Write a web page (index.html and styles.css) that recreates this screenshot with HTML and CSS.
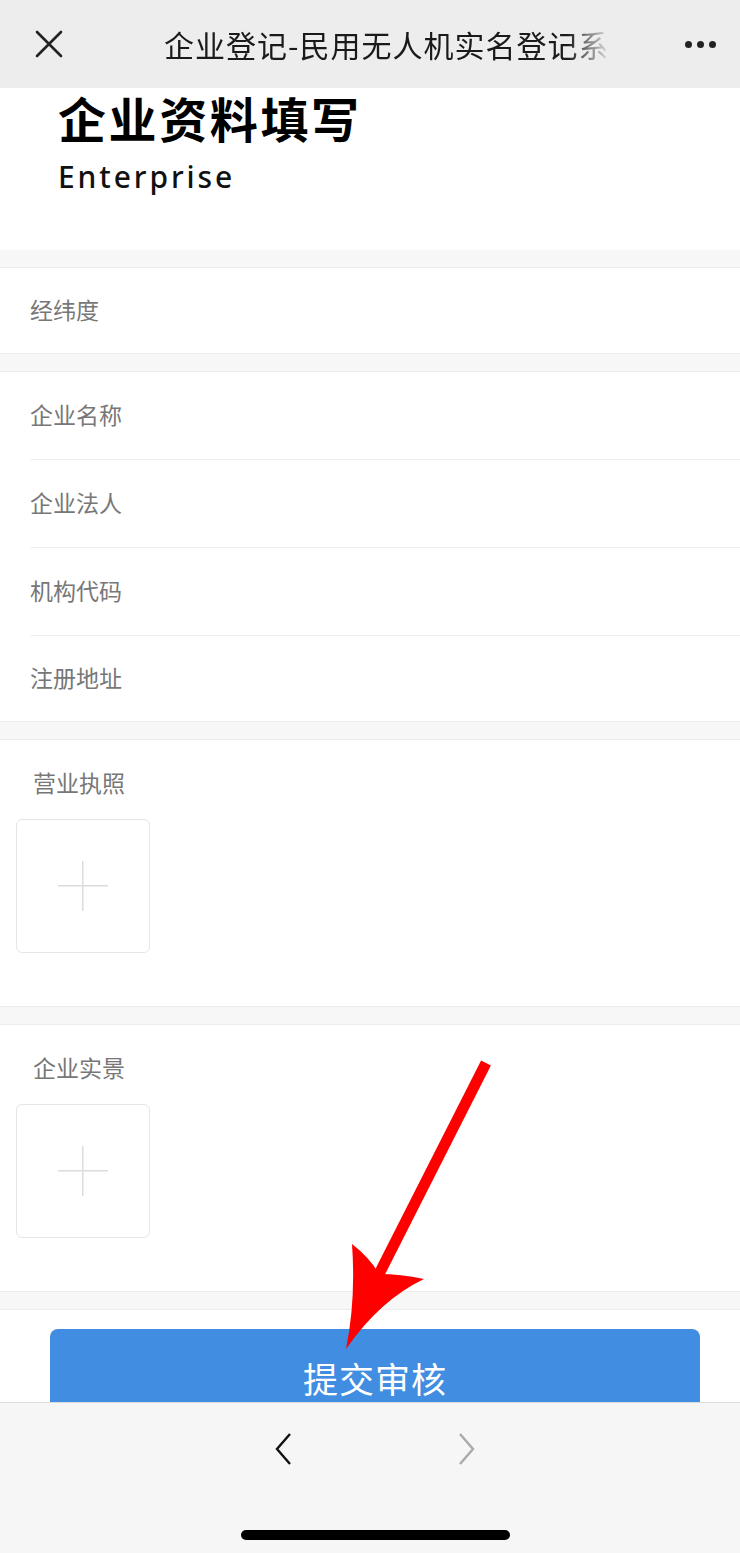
FILE: index.html
```html
<!DOCTYPE html>
<html lang="zh-CN">
<head>
<meta charset="utf-8">
<title>企业登记-民用无人机实名登记系统</title>
<link rel="stylesheet" href="styles.css">
</head>
<body>
<div class="screen">
  <header class="topbar">
    <div class="tb-close">
      <svg width="30" height="30" viewBox="0 0 30 30"><path d="M3 3 L27 27 M27 3 L3 27" stroke="#222" stroke-width="2.6" stroke-linecap="round" fill="none"/></svg>
    </div>
    <div class="tb-title"><span>企业登记-民用无人机实名登记系统</span></div>
    <div class="tb-more">
      <span class="dot"></span><span class="dot"></span><span class="dot"></span>
    </div>
  </header>

  <main class="content">
    <section class="hero">
      <h1 class="hero-title">企业资料填写</h1>
      <div class="hero-sub">Enterprise</div>
    </section>

    <section class="card">
      <div class="row">经纬度</div>
    </section>

    <section class="card">
      <div class="row">企业名称</div>
      <div class="row">企业法人</div>
      <div class="row">机构代码</div>
      <div class="row">注册地址</div>
    </section>

    <section class="card upload">
      <div class="up-label">营业执照</div>
      <div class="up-box"><span class="plus"></span></div>
    </section>

    <section class="card upload">
      <div class="up-label">企业实景</div>
      <div class="up-box"><span class="plus"></span></div>
    </section>

    <section class="card submit">
      <div class="btn">提交审核</div>
    </section>
  </main>

  <footer class="navbar">
    <div class="nav-arrows">
      <svg width="20" height="32" viewBox="0 0 20 32"><path d="M16 1 L3 16 L16 31" stroke="#111" stroke-width="2.4" fill="none" stroke-linejoin="miter"/></svg>
      <svg width="20" height="32" viewBox="0 0 20 32"><path d="M4 1 L17 16 L4 31" stroke="#aaa" stroke-width="2.4" fill="none"/></svg>
    </div>
    <div class="home-ind"></div>
  </footer>

  <svg class="annot" width="740" height="1553" viewBox="0 0 740 1553">
    <line x1="486" y1="1063" x2="376" y2="1280" stroke="#ff0000" stroke-width="11"/>
    <path d="M346 1349 Q356 1300 352 1244 Q370 1258 379 1274 Q400 1274 424 1279 Q380 1300 346 1349 Z" fill="#ff0000"/>
  </svg>
</div>
</body>
</html>
```

FILE: styles.css
```css
* { box-sizing: border-box; }
html, body { margin: 0; padding: 0; }
body {
  font-family: "Noto Sans", "Noto Sans CJK SC", sans-serif;
  background: #f7f7f7;
}
.screen {
  position: relative;
  width: 740px;
  height: 1553px;
  display: flex;
  flex-direction: column;
  overflow: hidden;
}
.topbar {
  height: 88px;
  flex: none;
  background: #ededed;
  display: flex;
  align-items: center;
}
.tb-close {
  width: 100px;
  display: flex;
  justify-content: center;
  padding-right: 2px;
}
.tb-title {
  flex: 1;
  padding-left: 64px;
  padding-right: 48px;
  overflow: hidden;
  white-space: nowrap;
}
.tb-title span {
  display: block;
  overflow: hidden;
  font-family: "Noto Sans CJK SC", sans-serif;
  font-size: 30px;
  letter-spacing: 1px;
  color: #1a1a1a;
  -webkit-mask-image: linear-gradient(to right, #000 90%, transparent 100%);
  mask-image: linear-gradient(to right, #000 90%, transparent 100%);
}
.tb-more {
  width: 80px;
  display: flex;
  justify-content: center;
  gap: 5px;
}
.dot {
  width: 7px;
  height: 7px;
  border-radius: 50%;
  background: #222;
}
.content {
  flex: 1;
  overflow: hidden;
  background: #f7f7f7;
}
.hero {
  background: #fff;
  padding: 0 0 53px 58px;
}
.hero-title {
  margin: 0;
  font-family: "Noto Sans CJK SC", sans-serif;
  font-size: 48px;
  line-height: 58px;
  font-weight: 700;
  letter-spacing: 2.6px;
  color: #000;
}
.hero-sub {
  margin-top: 11px;
  font-family: "Noto Sans", sans-serif;
  font-size: 30px;
  line-height: 40px;
  font-weight: 500;
  letter-spacing: 2.9px;
  color: #111;
}
.card {
  background: #fff;
  border-top: 1px solid #ececec;
  border-bottom: 1px solid #ececec;
  margin-top: 17px;
}
.row {
  margin-left: 30px;
  height: 88px;
  display: flex;
  align-items: center;
  padding-bottom: 3px;
  font-family: "Noto Sans CJK SC", sans-serif;
  font-size: 23px;
  color: #777;
  border-bottom: 1px solid #efefef;
}
.row:last-child { border-bottom: none; height: 85px; }
.upload {
  padding: 26px 0 54px 16px;
  height: 268px;
}
.up-label {
  padding-left: 17px;
  font-family: "Noto Sans CJK SC", sans-serif;
  font-size: 23px;
  line-height: 32px;
  color: #777;
}
.up-box {
  margin-top: 21px;
  width: 134px;
  height: 134px;
  border: 1px solid #e6e6e6;
  border-radius: 6px;
  display: flex;
  align-items: center;
  justify-content: center;
}
.plus {
  width: 50px;
  height: 50px;
  background:
    linear-gradient(#dcdcdc, #dcdcdc) center / 50px 1.5px no-repeat,
    linear-gradient(#dcdcdc, #dcdcdc) center / 1.5px 50px no-repeat;
}
.submit {
  padding: 19px 40px 0 50px;
  height: 200px;
  border-bottom: none;
}
.btn {
  height: 96px;
  background: #418de1;
  border-radius: 8px;
  color: #fff;
  display: flex;
  align-items: center;
  justify-content: center;
  font-family: "Noto Sans CJK SC", sans-serif;
  font-size: 35px;
  letter-spacing: 1px;
}
.navbar {
  flex: none;
  height: 151px;
  background: #f6f6f6;
  border-top: 1px solid #dcdcdc;
  display: flex;
  flex-direction: column;
  align-items: center;
}
.nav-arrows {
  margin-top: 30px;
  display: flex;
  gap: 162px;
  padding-left: 10px;
}
.home-ind {
  margin-top: 65px;
  margin-left: 10px;
  width: 269px;
  height: 10px;
  border-radius: 5px;
  background: #000;
}
.annot {
  position: absolute;
  top: 0;
  left: 0;
  pointer-events: none;
}
```
